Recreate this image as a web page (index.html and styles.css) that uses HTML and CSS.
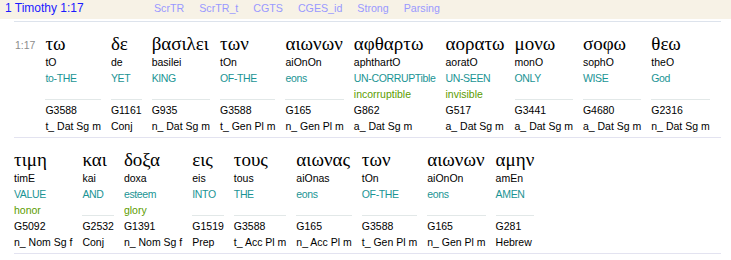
FILE: index.html
```html
<!DOCTYPE html>
<html>
<head>
<meta charset="utf-8">
<link rel="stylesheet" href="styles.css">
</head>
<body>
<div class="header">
  <span class="title">1 Timothy 1:17</span>
  <nav class="links">
    <a>ScrTR</a><a>ScrTR_t</a><a>CGTS</a><a>CGES_id</a><a>Strong</a><a>Parsing</a>
  </nav>
</div>
<div class="verse">
  <div class="row">
    <div class="vnum">1:17</div>
    <div class="w"><div class="gk">τω</div><div class="tr">tO</div><div class="gl">to-THE</div><div class="g2 empty"></div><div class="st">G3588</div><div class="pa">t_ Dat Sg m</div></div>
    <div class="w"><div class="gk">δε</div><div class="tr">de</div><div class="gl">YET</div><div class="g2 empty"></div><div class="st">G1161</div><div class="pa">Conj</div></div>
    <div class="w"><div class="gk">βασιλει</div><div class="tr">basilei</div><div class="gl">KING</div><div class="g2 empty"></div><div class="st">G935</div><div class="pa">n_ Dat Sg m</div></div>
    <div class="w"><div class="gk">των</div><div class="tr">tOn</div><div class="gl">OF-THE</div><div class="g2 empty"></div><div class="st">G3588</div><div class="pa">t_ Gen Pl m</div></div>
    <div class="w"><div class="gk">αιωνων</div><div class="tr">aiOnOn</div><div class="gl">eons</div><div class="g2 empty"></div><div class="st">G165</div><div class="pa">n_ Gen Pl m</div></div>
    <div class="w"><div class="gk">αφθαρτω</div><div class="tr">aphthartO</div><div class="gl">UN-CORRUPTible</div><div class="g2">incorruptible</div><div class="st">G862</div><div class="pa">a_ Dat Sg m</div></div>
    <div class="w"><div class="gk">αορατω</div><div class="tr">aoratO</div><div class="gl">UN-SEEN</div><div class="g2">invisible</div><div class="st">G517</div><div class="pa">a_ Dat Sg m</div></div>
    <div class="w"><div class="gk">μονω</div><div class="tr">monO</div><div class="gl">ONLY</div><div class="g2 empty"></div><div class="st">G3441</div><div class="pa">a_ Dat Sg m</div></div>
    <div class="w"><div class="gk">σοφω</div><div class="tr">sophO</div><div class="gl">WISE</div><div class="g2 empty"></div><div class="st">G4680</div><div class="pa">a_ Dat Sg m</div></div>
    <div class="w"><div class="gk">θεω</div><div class="tr">theO</div><div class="gl">God</div><div class="g2 empty"></div><div class="st">G2316</div><div class="pa">n_ Dat Sg m</div></div>
  </div>
  <div class="row">
    <div class="w"><div class="gk">τιμη</div><div class="tr">timE</div><div class="gl">VALUE</div><div class="g2">honor</div><div class="st">G5092</div><div class="pa">n_ Nom Sg f</div></div>
    <div class="w"><div class="gk">και</div><div class="tr">kai</div><div class="gl">AND</div><div class="g2 empty"></div><div class="st">G2532</div><div class="pa">Conj</div></div>
    <div class="w"><div class="gk">δοξα</div><div class="tr">doxa</div><div class="gl">esteem</div><div class="g2">glory</div><div class="st">G1391</div><div class="pa">n_ Nom Sg f</div></div>
    <div class="w"><div class="gk">εις</div><div class="tr">eis</div><div class="gl">INTO</div><div class="g2 empty"></div><div class="st">G1519</div><div class="pa">Prep</div></div>
    <div class="w"><div class="gk">τους</div><div class="tr">tous</div><div class="gl">THE</div><div class="g2 empty"></div><div class="st">G3588</div><div class="pa">t_ Acc Pl m</div></div>
    <div class="w"><div class="gk">αιωνας</div><div class="tr">aiOnas</div><div class="gl">eons</div><div class="g2 empty"></div><div class="st">G165</div><div class="pa">n_ Acc Pl m</div></div>
    <div class="w"><div class="gk">των</div><div class="tr">tOn</div><div class="gl">OF-THE</div><div class="g2 empty"></div><div class="st">G3588</div><div class="pa">t_ Gen Pl m</div></div>
    <div class="w"><div class="gk">αιωνων</div><div class="tr">aiOnOn</div><div class="gl">eons</div><div class="g2 empty"></div><div class="st">G165</div><div class="pa">n_ Gen Pl m</div></div>
    <div class="w"><div class="gk">αμην</div><div class="tr">amEn</div><div class="gl">AMEN</div><div class="g2 empty"></div><div class="st">G281</div><div class="pa">Hebrew</div></div>
  </div>
</div>
</body>
</html>
```

FILE: styles.css
```css
html, body {
  margin: 0;
  padding: 0;
  background: #ffffff;
}
body {
  font-family: "Liberation Sans", Arial, sans-serif;
  font-size: 10.5px;
  color: #000;
}
.header {
  height: 19px;
  background: #f7f2e6;
  display: flex;
  align-items: baseline;
  padding-left: 5px;
}
.title {
  width: 149px;
  font-size: 12px;
  line-height: 17px;
  color: #1a1aff;
}
.links {
  display: flex;
  gap: 15px;
}
.links a {
  color: #9999ff;
  font-size: 10.67px;
}
.verse {
  margin: 2px 10px 0 14px;
  border-top: 1px solid #dde3ec;
}
.row {
  display: flex;
  gap: 10px;
  align-items: flex-start;
  padding: 11px 0 3px 0;
  border-bottom: 1px solid #e3e3f0;
}
.vnum {
  margin-top: 4px;
  margin-left: 1px;
  line-height: 16px;
  color: #8c8c8c;
}
.w {
  display: flex;
  flex-direction: column;
  line-height: 16px;
}
.gk {
  font-family: "Liberation Serif", "Times New Roman", serif;
  font-size: 19px;
  line-height: 21px;
}
.gl {
  color: #1a9494;
  letter-spacing: -0.35px;
}
.g2 {
  color: #5c9c00;
  height: 16px;
}
.g2.empty {
  height: 13px;
  border-bottom: 1px solid #e2e8e8;
  margin-bottom: 2px;
}
```
